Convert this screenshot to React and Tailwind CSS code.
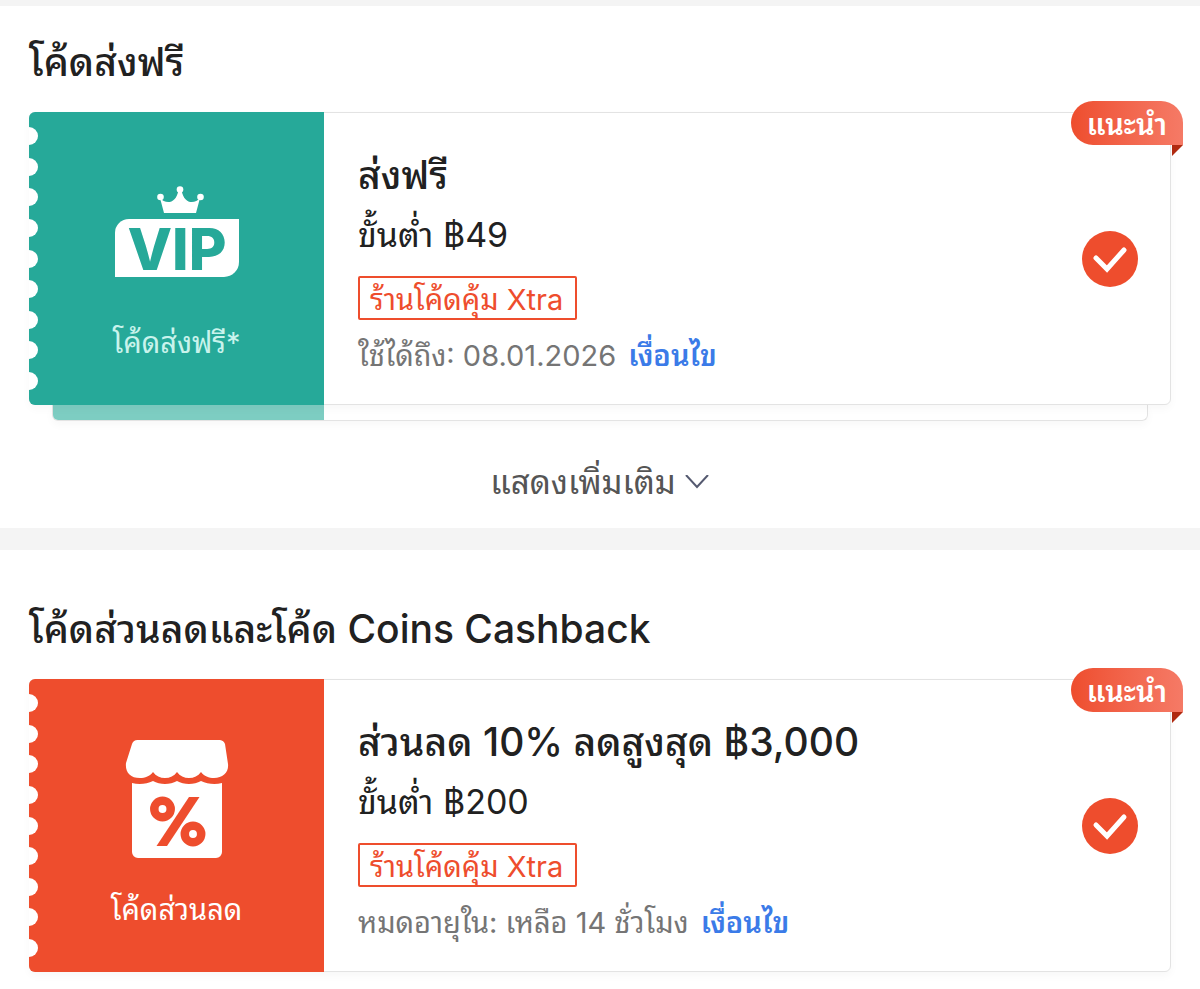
// ─────────────────────────────────────────────
//  App.jsx
//  Voucher picker: free shipping codes and
//  discount / coins cashback codes.
// ─────────────────────────────────────────────

const NOTCHES = [0, 1, 2, 3, 4, 5, 6, 7, 8];

function VipIcon() {
  return (
    <svg viewBox="0 0 124 106" className="w-[124px] h-[106px]" role="img" aria-label="VIP">
      <g fill="#fff">
        <circle cx="65" cy="3.5" r="3.3" />
        <circle cx="45.5" cy="11" r="3.3" />
        <circle cx="85.5" cy="11" r="3.3" />
        <path d="M45 12c5 6 16 7 18.500-8h3c2.500 15 13.500 14 18.500 8l-4 15H49z" />
        <path d="M14 33h110v43a15 15 0 0 1-15 15H0V47a14 14 0 0 1 14-14z" />
      </g>
      <text
        x="62"
        y="84"
        textAnchor="middle"
        fill="#26a999"
        className="font-['Inter',sans-serif] text-[58px] font-extrabold"
      >
        VIP
      </text>
    </svg>
  );
}

function ShopIcon() {
  return (
    <svg viewBox="0 0 104 120" className="w-[104px] h-[120px]" aria-hidden="true">
      <path
        fill="#fff"
        d="M13 1h82a6 6 0 0 1 5 4l3 20c1 8-5 14-14 14-5 0-10-2-13-6-3 4-7 6-12 6s-9-2-12-6c-3 4-7 6-12 6s-9-2-12-6c-3 4-8 6-13 6C5 39 0 33 1 24L7 5a6 6 0 0 1 6-4z"
      />
      <path
        fill="#fff"
        d="M7 44c7 2 15 1 21-2 7 4 17 4 24 0 7 4 17 4 24 0 6 3 14 4 21 2v69a6 6 0 0 1-6 6H13a6 6 0 0 1-6-6z"
      />
      <g stroke="#ee4d2d" strokeWidth="8.500" fill="none">
        <circle cx="37.500" cy="70" r="8.200" />
        <circle cx="68" cy="95" r="8.200" />
      </g>
      <path d="M64 58h10.500L42 107H31.500z" fill="#ee4d2d" />
    </svg>
  );
}

function Ribbon({ children }) {
  return (
    <div className="absolute -top-3 -right-[13px] flex flex-col items-end">
      <span className="flex h-11 w-28 items-center justify-center rounded-l-[22px] rounded-tr-[22px] bg-linear-to-r from-[#ee4d2d] to-[#f57a66] pt-1 text-[29px] leading-8 font-semibold text-white">
        {children}
      </span>
      <svg viewBox="0 0 11 11" className="size-[11px]" aria-hidden="true">
        <path d="M0 0h11L0 11z" fill="#b02a10" />
      </svg>
    </div>
  );
}

function VoucherCard({ id, color, icon, label, labelColor, title, minimum, expiry }) {
  return (
    <article className="relative flex min-h-[293px] rounded-md border border-[#e3e3e3] bg-white shadow-[0_4px_8px_rgba(0,0,0,0.03)]">
      {/* Coloured stub with the perforated edge */}
      <div className={`relative -m-px flex w-[295px] shrink-0 flex-col items-center rounded-l-md ${color}`}>
        <div className="absolute inset-y-[15px] left-0 flex flex-col justify-between">
          {NOTCHES.map((n) => (
            <span key={n} className="h-[18px] w-[9px] rounded-r-full bg-white" />
          ))}
        </div>
        <div className="flex h-[180px] items-end">{icon}</div>
        <span className={`mt-auto mb-11 text-[29px] leading-9 ${labelColor}`}>{label}</span>
      </div>

      {/* Details */}
      <div className="flex min-w-0 flex-1 flex-col items-start pt-9 pl-[35px]">
        <h3 id={`${id}-title`} className="text-[39px] leading-[52px] font-medium">{title}</h3>
        <p className="mt-2 text-[34px] leading-[52px]">{minimum}</p>
        <span className="mt-[15px] flex h-11 items-center rounded-xs border-2 border-[#ee4d2d] pt-1 pr-3 pl-2.5 text-[29px] leading-8 text-[#ee4d2d]">
          ร้านโค้ดคุ้ม Xtra
        </span>
        <p className="mt-4 flex gap-3 text-[29px] leading-10 text-[#757575]">
          {expiry}
          <a href="#terms" className="font-semibold text-[#3b7be8]">เงื่อนไข</a>
        </p>
      </div>

      {/* Selection */}
      <label className="relative mr-8 flex size-14 shrink-0 self-center">
        <input
          type="checkbox"
          defaultChecked
          aria-labelledby={`${id}-title`}
          className="peer size-14 appearance-none rounded-full border-2 border-gray-300 checked:border-0 checked:bg-[#ee4d2d]"
        />
        <svg viewBox="0 0 56 56" className="pointer-events-none absolute inset-0" aria-hidden="true">
          <path d="M14 27l11 11 17-19" fill="none" stroke="#fff" strokeWidth="5" strokeLinecap="round" />
        </svg>
      </label>

      <Ribbon>แนะนำ</Ribbon>
    </article>
  );
}

export default function App() {
  return (
    <main className="min-h-screen bg-white font-['Inter','Noto_Sans_Thai_Looped','Loma','Waree','Noto_Sans_Thai','Noto_Sans',sans-serif] text-[#212121]">
      <section className="border-t-[6px] border-[#f4f4f4] px-[29px] pt-[30px] pb-[19px]">
        <h2 className="text-[39px] leading-[52px] font-medium">โค้ดส่งฟรี</h2>
        <div className="mt-6">
          <VoucherCard
            id="shipping"
            color="bg-[#26a999]"
            icon={<VipIcon />}
            label="โค้ดส่งฟรี*"
            labelColor="text-[#c9f3ec]"
            title="ส่งฟรี"
            minimum="ขั้นต่ำ ฿49"
            expiry="ใช้ได้ถึง: 08.01.2026"
          />
          {/* Edge of the next voucher in the stack */}
          <div className="mx-[23px] flex h-4 overflow-hidden rounded-b-md border border-t-0 border-[#e3e3e3] shadow-[0_4px_8px_rgba(0,0,0,0.03)]">
            <span className="w-[271px] bg-[#7dcdc2]" />
          </div>
        </div>
        <button type="button" className="mx-auto mt-9 flex h-[52px] items-center gap-2 text-[33px] text-[#555]">
          แสดงเพิ่มเติม
          <svg viewBox="0 0 26 16" className="h-4 w-[26px]" aria-hidden="true">
            <path d="M2 0l11 12L24 0" fill="none" stroke="#555a70" strokeWidth="2" />
          </svg>
        </button>
      </section>

      <section className="border-t-[22px] border-[#f4f4f4] px-[29px] pt-[53px] pb-4">
        <h2 className="text-[39px] leading-[52px] font-medium">โค้ดส่วนลดและโค้ด Coins Cashback</h2>
        <div className="mt-6">
          <VoucherCard
            id="discount"
            color="bg-[#ee4d2d]"
            icon={<ShopIcon />}
            label="โค้ดส่วนลด"
            labelColor="text-white"
            title="ส่วนลด 10% ลดสูงสุด ฿3,000"
            minimum="ขั้นต่ำ ฿200"
            expiry="หมดอายุใน: เหลือ 14 ชั่วโมง"
          />
        </div>
      </section>
    </main>
  );
}
